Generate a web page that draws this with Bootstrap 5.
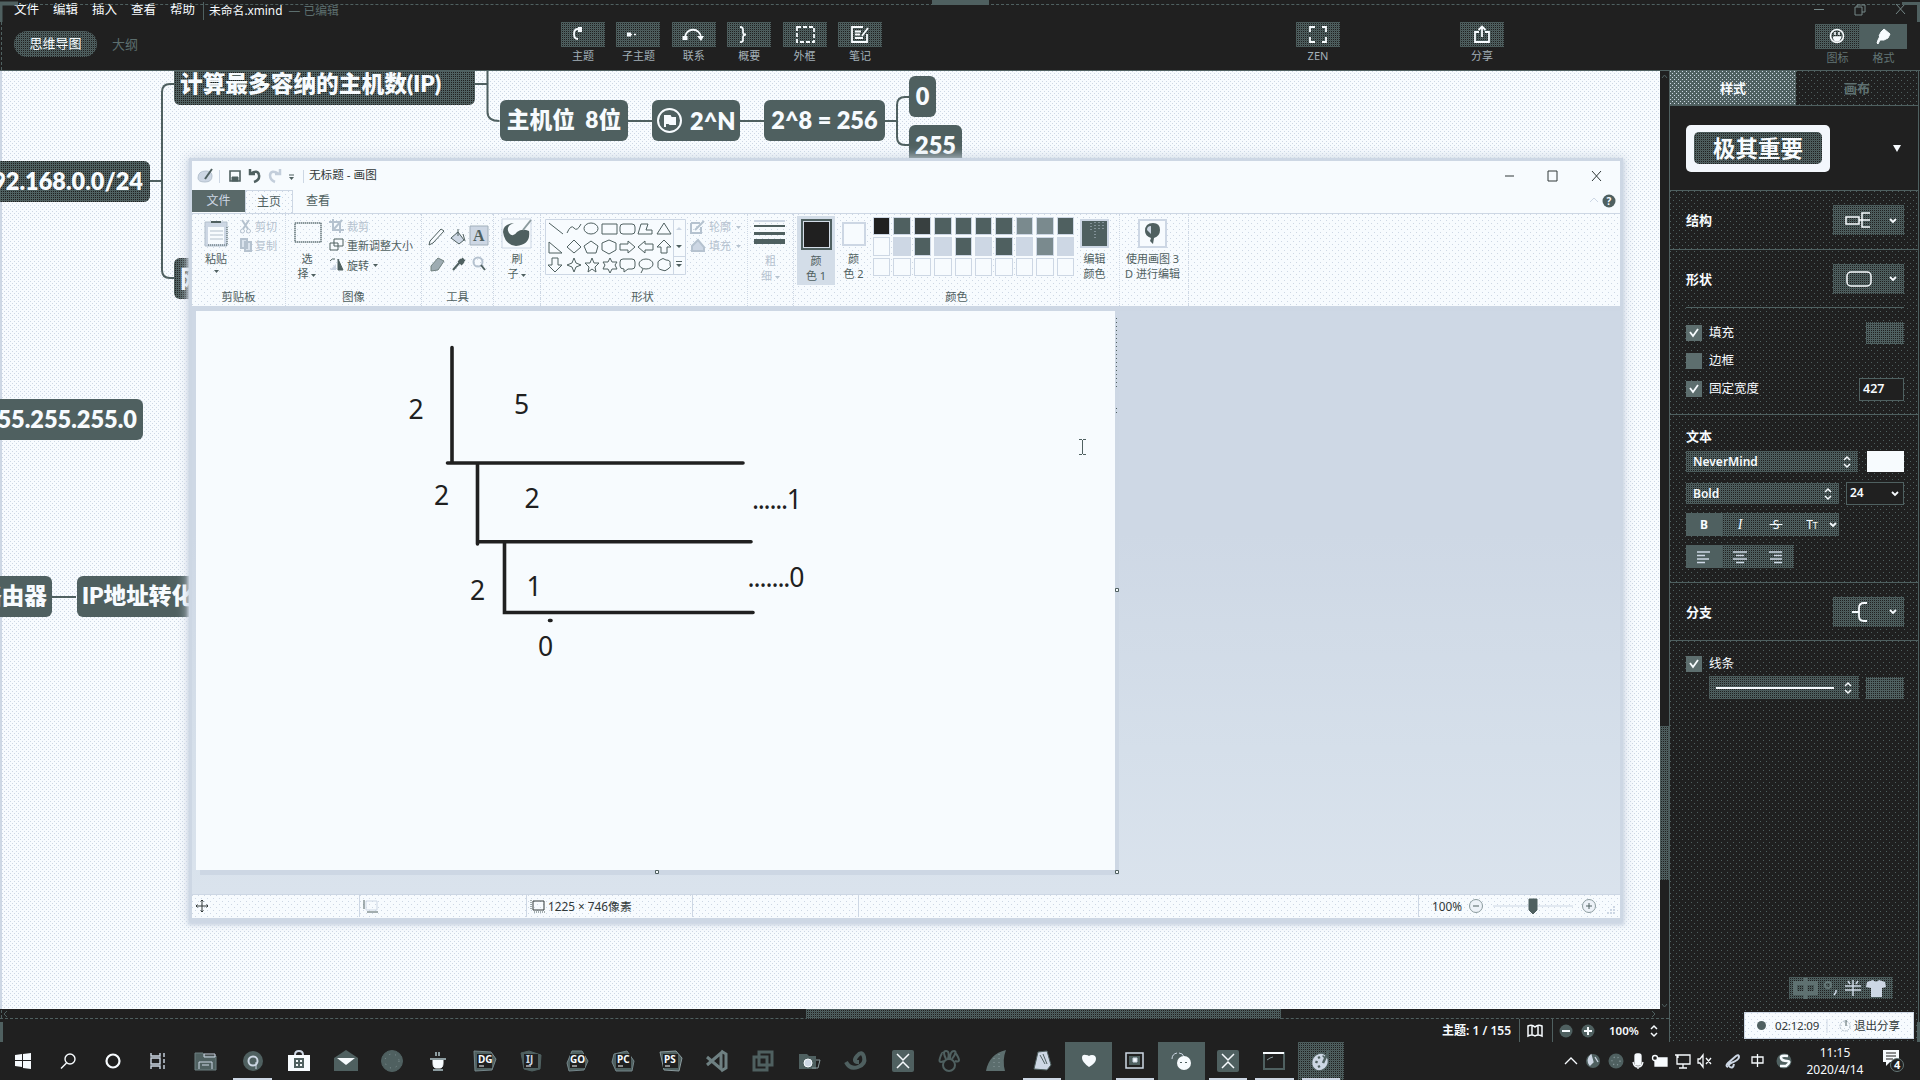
<!DOCTYPE html>
<html lang="zh-CN">
<head>
<meta charset="utf-8">
<title>未命名.xmind</title>
<link rel="stylesheet" href="https://cdn.jsdelivr.net/npm/bootstrap@5.3.0/dist/css/bootstrap.min.css">
<script src="https://cdn.jsdelivr.net/npm/bootstrap@5.3.0/dist/js/bootstrap.bundle.min.js"></script>
<style>
:root{--k:#202020;--t:#4f6060;--l:#cdd7e4;--w:#f7fbfe}
body{width:1920px;height:1080px;overflow:hidden;background:var(--k);color:var(--w);font:12px/16px "Noto Sans","Noto Sans CJK SC",sans-serif;white-space:nowrap}
svg{display:block;flex:none;overflow:visible}
svg:not([fill]){fill:none}
svg:not([stroke]){stroke:currentColor}
svg text{stroke:none}
.dots{background:conic-gradient(from 270deg at 1px 1px,var(--t) 90deg,transparent 0) 0 0/6px 6px,conic-gradient(from 270deg at 1px 1px,var(--t) 90deg,transparent 0) 3px 3px/6px 6px,var(--k)}
.mesh{background:conic-gradient(var(--t) 25%,var(--k) 0 50%,var(--t) 0 75%,#485757 0) 0 0/2px 2px}
.paper{background:conic-gradient(from 270deg at 1px 1px,var(--l) 90deg,transparent 0) 0 0/4px 4px,conic-gradient(from 270deg at 1px 1px,var(--l) 90deg,transparent 0) 2px 2px/4px 4px,var(--w)}
.soft{background:conic-gradient(from 270deg at 1px 1px,var(--l) 90deg,transparent 0) 0 0/6px 6px,conic-gradient(from 270deg at 1px 1px,var(--l) 90deg,transparent 0) 3px 3px/6px 6px,var(--w)}
.pale{background:conic-gradient(from 270deg at 1px 1px,var(--l) 90deg,transparent 0) 0 0/4px 4px,conic-gradient(from 270deg at 1px 1px,var(--l) 90deg,transparent 0) 2px 2px/4px 4px,var(--t)}
/* header */
.top-area{height:70px;border-bottom:1px solid var(--t);padding:0 0 0 14px}
.edge-line{left:0;right:0;top:4px;border-top:1px dashed var(--t)}
.grip{left:932px;top:0;width:57px;height:5px;background:var(--t)}
.menu-row{height:20px;gap:14px;padding-top:2px;font-size:12.5px}
.menu-row>span{width:25px;text-align:center}
.docname{border-left:1px solid var(--t);padding-left:5px;margin-left:-6px}
.pill{width:83px;height:26px;border-radius:13px;line-height:25px;text-align:center;font-size:13px}
.tool{width:44px;font-size:11px;line-height:14px;color:#a3b0b8;text-align:center}
.tool>div{height:25px;color:var(--w);margin-bottom:2px}
.tools{left:561px;top:22px;gap:11.4px}
/* canvas */
.mapwrap{width:1670px;border-right:1px solid var(--t)}
.board{height:938px;box-shadow:inset 2px 0 0 var(--l)}
.node{position:absolute;height:41px;margin-left:2px;border-radius:6px;background:var(--t);font:800 23.5px/40px Lato,"Noto Sans CJK SC",sans-serif;text-align:center;color:var(--w)}
.node.dk{background:conic-gradient(var(--k) 25%,var(--t) 0) 0 0/2px 2px}
.wires{position:absolute;left:0;top:0}
.vbar{width:9px;padding-top:655px}
.vbar>div{height:154px}
.hbar{height:10px;border-bottom:1px dashed var(--t);padding-left:806px}
.hbar>div{width:475px;height:10px}
.status{height:23px;font-weight:600}
.status>.sep{width:1px;background:var(--t);align-self:stretch}
/* paint window */
.paint{position:absolute;left:192px;top:161px;width:1428px;height:757px;background:var(--w);color:var(--t);box-shadow:0 0 0 3px var(--l),0 3px 3px 4px var(--l),0 0 10px 5px #cdd7e4cc}
.ptitle{height:29px;font-size:12px;color:#303838}
.ptabs{height:23px}
.ptabs .filetab{width:53px;height:22px;background:#596969;color:var(--l);text-align:center;line-height:21px}
.ptabs .home{width:48px;height:24px;border:1px solid var(--l);border-bottom:0;text-align:center;line-height:21px}
.ribbon{height:93px;border-top:1px solid var(--l);font-size:11px;line-height:15px}
.rg{border-right:1px dotted var(--l);height:92px;position:relative;display:flex;flex-direction:column}
.rg>footer{text-align:center;height:18px;margin-top:auto;line-height:17px;font-size:11.3px}
.rb{height:70px;padding-top:5px}
.dim{color:#b5c2cf}
.c1{width:38px;height:69px;background:#d3dde8;margin-top:-3px;padding-top:3px}
.sw1{width:31px;height:31px;border:2px solid var(--t);outline:0;padding:1px}
.sw1>div{background:var(--k);height:100%}
.pal{display:grid;grid-template-columns:repeat(10,20.4px);grid-auto-rows:20.3px;width:204px;margin-top:-3px;height:61px}
.pal i{border:2px solid var(--l);outline:1px solid var(--w);outline-offset:-1px;margin:0 1px 0 0;background:var(--t)}
.pal i.z{background:var(--l)} .pal i.e{background:var(--w)} .pal i.b{background:var(--k)} .pal i.p{background:#7a8a8e}
.work{height:588px;border-top:5px solid var(--l);background:linear-gradient(#ced8e5 0 38%,#d5dfea 75%,#dae3ed);position:relative}
.sheet{position:absolute;left:4px;top:0;width:919px;height:559px;background:var(--w);box-shadow:4px 5px 0 #cdd7e4}
.pstat{height:24px;border-top:1px solid var(--l);color:#303838;font-size:12px}
.pstat>div{flex:none;border-right:1px solid var(--l);height:22px;display:flex;align-items:center;padding-left:3px}
/* format panel */
.side{width:249px;border-right:1px solid var(--t)}
.side section{border-bottom:1px solid var(--t);padding:0 14px 0 16px}
.side h6{font-size:13px;font-weight:700;margin:0;line-height:18px}
.ptab{height:34px;line-height:34px;text-align:center;font-size:13px;font-weight:700}
.dd{width:71px;height:30px;padding:0 7px 0 12px}
.chk{width:16px;height:16px;background:#5d6e6e}
.opt{height:16px;font-size:12.5px}
.opt>span{margin-left:7px}
.sel{height:21px;padding:0 7px;font-weight:600}
.swt{width:38px;height:22px;background:conic-gradient(var(--k) 25%,var(--t) 0) 0 0/2px 2px}
.field{border:1px solid var(--t);background:var(--k);font-weight:600;padding-left:3px;line-height:20px}
.cell{width:36px;display:flex;align-items:center;justify-content:center}
.cell.on{background:var(--t)}
/* taskbar */
.task{height:38px}
.ti{width:46.45px;height:38px;display:flex;align-items:center;justify-content:center;position:relative;flex:none}
.ti.n{width:45px}
.ti.run:after{content:"";position:absolute;left:4px;right:4px;bottom:0;height:2px;background:var(--l)}
.ti.act{background:var(--t)}
.rec{position:absolute;left:1744px;top:1012px;width:170px;height:27px;border:1px solid var(--l);color:#303838}
.ime{position:absolute;left:1789px;top:977px;width:104px;height:22px}
</style>
</head>
<body class="d-flex flex-column position-relative">
<header class="top-area position-relative flex-shrink-0" style="height:71px">
  <div class="menu-row d-flex">
    <span>文件</span><span>编辑</span><span>插入</span><span>查看</span><span>帮助</span>
    <div class="docname" style="font-size:11.8px">未命名.xmind <span style="color:#5c6e6e">&nbsp;— 已编辑</span></div>
  </div>
  <div class="d-flex align-items-center" style="margin-top:11px">
    <div class="pill mesh">思维导图</div><div style="margin-left:15px;font-size:13px;color:#5c6e6e">大纲</div>
  </div>
  <div class="edge-line position-absolute"></div><div class="grip position-absolute"></div>
  <div class="tools position-absolute d-flex">
    <div class="tool"><div class="mesh"><svg width="44" height="25" stroke-width="1.8"><path d="M17 7q-4 0-4 5t4 5"/><path d="M17 7.5h4" stroke-width="5"/></svg></div>主题</div>
    <div class="tool"><div class="mesh"><svg width="44" height="25"><path d="M11 12.500h4" stroke-width="4"/><path d="M15 12.500h5" stroke-width="1.500" stroke-dasharray="1 2 3"/></svg></div>子主题</div>
    <div class="tool"><div class="mesh"><svg width="44" height="25" stroke-width="1.8"><path d="M13 16c0-11 16-11 16 0"/><path d="M10.500 14h5v4h-5zM25 14h7l-3 5z" fill="currentColor" stroke="none"/></svg></div>联系</div>
    <div class="tool"><div class="mesh"><svg width="44" height="25" stroke-width="1.8"><path d="M13 5q3.500 0 3 4t3 3.500q-3.500 0-3 4t-3 3.500"/></svg></div>概要</div>
    <div class="tool"><div class="mesh"><svg width="44" height="25" stroke-width="1.8"><rect x="14" y="5" width="17" height="15" stroke-dasharray="4 2"/></svg></div>外框</div>
    <div class="tool"><div class="mesh"><svg width="44" height="25" stroke-width="1.8"><path d="M25 5H14v15h15v-8M17 9.500h6M17 12.500h5M17 16h8M30 6l-6 8"/></svg></div>笔记</div>
  </div>
  <div class="tools position-absolute d-flex" style="left:1296px"><div class="tool"><div class="mesh"><svg width="44" height="25" stroke-width="1.800"><path d="M14 10V5h5M26 5h4v5M14 15v5h5M26 20h4v-5"/></svg></div>ZEN</div></div>
  <div class="tools position-absolute d-flex" style="left:1460px"><div class="tool"><div class="mesh"><svg width="44" height="25" stroke-width="1.800"><path d="M19 10h-4v10h14V10h-4M22 15V5M18.500 8L22 4.500 25.500 8"/></svg></div>分享</div></div>
  <div class="tools position-absolute d-flex" style="left:1815px;top:24px;gap:0">
    <div class="tool" style="width:45px;color:#637575"><div class="mesh"><svg width="44" height="25" stroke-width="1.6"><circle cx="22" cy="12" r="6.500"/><path d="M18.500 13h7q-1 4-3.500 4t-3.500-4" fill="currentColor"/><path d="M20 8v3M24 8v3"/></svg></div>图标</div>
    <div class="tool" style="width:47px;color:#637575"><div style="background:#4f6060"><svg width="47" height="25"><path d="M24 5l6 5-2 4-4 2-5-4 2-4zM20 12l4 4-4 0-2 4-1-1 1-3z" fill="currentColor"/></svg></div>格式</div>
  </div>
  <svg class="position-absolute" style="left:1814px;top:3px;color:#758787" width="95" height="14"><path d="M0 6.500h10M41 4h7v8h-7zM43 4V2h8v7h-3M82 1l9 10M91 1l-9 10"/></svg>
</header>

<main class="d-flex position-relative flex-shrink-0" style="height:971px">
  <div class="mapwrap d-flex flex-column flex-shrink-0">
    <div class="d-flex">
      <div class="board paper position-relative overflow-hidden flex-grow-1">
        <svg class="wires" width="1000" height="560" stroke="#4f6060" stroke-width="2"><g transform="translate(0,-71)"><path d="M150 181h12M176 84h-6q-8 0-8 8v178q0 8 8 8h6M475 84h12M487.500 70v42q0 9 12 9M628 121h24M740 121h24M885 121h12M910 97h-5q-8 0-8 8v32q0 8 8 8h5M52 597h24"/></g></svg>
        <div class="node dk" style="left:172px;top:-7px;width:301px;text-align:left;padding-left:6px;font-size:22.700px">计算最多容纳的主机数(IP)</div>
        <div class="node dk" style="left:-40px;top:90px;width:188px;text-align:right;padding-right:7px">192.168.0.0/24</div>
        <div class="node dk" style="left:172px;top:187px;width:60px;text-align:left;padding-left:6px">网</div>
        <div class="node" style="left:498px;top:29px;width:128px;font-size:22.700px;white-space:pre">主机位  8位</div>
        <div class="node d-flex align-items-center" style="left:650px;top:29px;width:88px;padding-left:5px;gap:8px"><svg width="25" height="25" stroke-width="2"><circle cx="12.500" cy="12.500" r="11.500"/><path d="M8 7v12M8 8h5l1 2h4v6h-5l-1-1H8z" fill="currentColor"/></svg>2^N</div>
        <div class="node pale" style="left:762px;top:29px;width:121px">2^8 = 256</div>
        <div class="node pale" style="left:907px;top:5px;width:27px">0</div>
        <div class="node pale" style="left:907px;top:54px;width:53px">255</div>
        <div class="node" style="left:-60px;top:328px;width:201px;text-align:right;padding-right:6px">255.255.255.0</div>
        <div class="node" style="left:-60px;top:505px;width:110px;text-align:right;padding-right:5px;font-size:22.700px">路由器</div>
        <div class="node" style="left:75px;top:505px;width:180px;text-align:left;padding-left:5px;font-size:22.700px">IP地址转化</div>
      </div>
      <div class="vbar"><div class="mesh"></div></div>
    </div>
    <div class="hbar"><div class="mesh"></div></div>
    <div class="status d-flex align-items-center justify-content-end">
      <span style="margin-right:8px">主题: 1 / 155</span><span class="sep"></span>
      <svg style="margin:0 9px 0 7px" width="16" height="13" stroke-width="1.500"><path d="M1 2q4-2 7 1 3-3 7-1v10q-4-2-7 0-3-2-7 0zM5 1v10M11 1v10"/></svg><span class="sep"></span>
      <svg style="margin:0 14px 0 6px" width="36" height="14"><circle cx="7" cy="7" r="6.500" fill="#4f6060" stroke="none"/><circle cx="29" cy="7" r="6.500" fill="#4f6060" stroke="none"/><path d="M3 7h8M25 7h8M29 3v8" stroke-width="2"/></svg>
      <span style="width:32px;font-size:11.500px">100%</span>
      <svg style="margin:0 11px 0 9px" width="8" height="12" stroke-width="1.500"><path d="M1 4l3-3 3 3M1 8l3 3 3-3"/></svg>
    </div>
  </div>

  <aside class="side dots">
    <div class="d-flex" style="border-bottom:1px solid #4f6060"><div class="ptab pale" style="width:126px">样式</div><div class="ptab flex-grow-1" style="color:#5f7171">画布</div></div>
    <section class="d-flex align-items-center justify-content-between" style="height:85px;background:#202020">
      <div class="d-flex align-items-center justify-content-center" style="width:144px;height:47px;border-radius:5px;background:#f3f7fc"><div class="mesh" style="width:128px;height:32px;border-radius:5px;font:700 22.5px/31px 'Noto Sans CJK SC',sans-serif;text-align:center">极其重要</div></div>
      <svg width="8" height="7" style="margin-right:3px"><path d="M0 0h8l-4 7z" fill="currentColor" stroke="none"/></svg>
    </section>
    <section class="d-flex align-items-center justify-content-between" style="height:59px"><h6>结构</h6><div class="dd mesh d-flex align-items-center justify-content-between"><svg width="26" height="18" stroke-width="1.500"><path d="M1 6h13v7H1zM14 9h11M25 2h-8v14h8"/></svg><svg width="8" height="5" stroke-width="1.800"><path d="M1 1l3 3 3-3"/></svg></div></section>
    <section style="height:165px">
      <div class="d-flex align-items-center justify-content-between" style="height:58px;border-bottom:1px solid #4f6060"><h6>形状</h6><div class="dd mesh d-flex align-items-center justify-content-between"><svg width="26" height="16" stroke-width="1.500"><rect x="2" y="1" width="24" height="14" rx="4"/></svg><svg width="8" height="5" stroke-width="1.800"><path d="M1 1l3 3 3-3"/></svg></div></div>
      <div class="opt d-flex align-items-center" style="margin-top:17px"><div class="chk"><svg width="16" height="16" stroke-width="1.800"><path d="M4 7l3 4 5-7"/></svg></div><span>填充</span><div class="swt ms-auto"></div></div>
      <div class="opt d-flex align-items-center" style="margin-top:12px"><div class="chk mesh"></div><span>边框</span></div>
      <div class="opt d-flex align-items-center" style="margin-top:12px"><div class="chk"><svg width="16" height="16" stroke-width="1.800"><path d="M4 7l3 4 5-7"/></svg></div><span>固定宽度</span><div class="field ms-auto" style="width:45px;height:23px">427</div></div>
    </section>
    <section style="height:168px;padding-top:12px">
      <h6>文本</h6>
      <div class="d-flex justify-content-between" style="margin-top:6px"><div class="sel mesh d-flex align-items-center justify-content-between" style="width:172px">NeverMind<svg width="8" height="12" stroke-width="1.500"><path d="M1 4l3-3 3 3M1 8l3 3 3-3"/></svg></div><div style="width:37px;background:#f7fbfe"></div></div>
      <div class="d-flex justify-content-between align-items-center" style="margin-top:10px;height:23px"><div class="sel mesh d-flex align-items-center justify-content-between" style="width:153px">Bold<svg width="8" height="12" stroke-width="1.500"><path d="M1 4l3-3 3 3M1 8l3 3 3-3"/></svg></div><div class="field d-flex mesh" style="width:58px;height:23px;padding:0"><div style="width:40px;background:#202020;padding-left:3px">24</div><svg width="16" height="21" stroke-width="1.800"><path d="M5 9l3 3 3-3"/></svg></div></div>
      <div class="d-inline-flex mesh" style="margin-top:8px;height:23px;width:153px"><div class="cell on fw-bold">B</div><div class="cell" style="font-family:'Liberation Serif';font-style:italic;font-size:14px">I</div><div class="cell"><s>&nbsp;S&nbsp;</s></div><div class="cell">T<small style="font-size:9px;padding-top:2px">T</small></div><svg width="8" height="23" stroke-width="1.800"><path d="M0 10l3 3 3-3"/></svg></div><br>
      <div class="d-inline-flex mesh" style="margin-top:9px;height:23px;color:#cdd7e4"><div class="cell on"><svg width="14" height="12" stroke-width="1.500"><path d="M0 1h13M0 4.500h8M0 8h12M0 11.500h8"/></svg></div><div class="cell"><svg width="14" height="12" stroke-width="1.500"><path d="M0 1h14M3 4.500h8M0 8h14M3 11.500h8"/></svg></div><div class="cell"><svg width="14" height="12" stroke-width="1.500"><path d="M0 1h13M5 4.500h8M1 8h12M5 11.500h8"/></svg></div></div>
    </section>
    <section class="d-flex align-items-center justify-content-between" style="height:58px"><h6>分支</h6><div class="dd mesh d-flex align-items-center justify-content-between"><svg width="26" height="20" stroke-width="1.800"><path d="M7 10h7M22 1h-3q-5 0-5 5v8q0 5 5 5h3"/></svg><svg width="8" height="5" stroke-width="1.800"><path d="M1 1l3 3 3-3"/></svg></div></section>
    <section class="border-0" style="padding-top:15px">
      <div class="opt d-flex align-items-center"><div class="chk"><svg width="16" height="16" stroke-width="1.800"><path d="M4 7l3 4 5-7"/></svg></div><span>线条</span></div>
      <div class="d-flex justify-content-between align-items-center" style="margin:4px 0 0 23px"><div class="sel mesh d-flex align-items-center justify-content-between" style="width:150px;height:23px"><svg width="118" height="2" stroke-width="2"><path d="M0 1h118"/></svg><svg width="8" height="12" stroke-width="1.500"><path d="M1 4l3-3 3 3M1 8l3 3 3-3"/></svg></div><div class="swt"></div></div>
    </section>
  </aside>
</main>

<footer class="task d-flex flex-shrink-0 align-items-center">
  <div class="ti n"><svg width="16" height="16" fill="#f7fbfe" stroke="none"><path d="M0 2l7-1v6H0zM8 1l8-1v7H8zM0 8h7v6l-7-1zM8 8h8v8l-8-1z"/></svg></div>
  <div class="ti n"><svg width="16" height="16" stroke-width="1.400"><circle cx="10" cy="6" r="5"/><path d="M6.500 10L1 15.500"/></svg></div>
  <div class="ti n"><svg width="16" height="16" stroke-width="2.200"><circle cx="8" cy="8" r="6.500"/></svg></div>
  <div class="ti n"><svg width="16" height="16" stroke="#cdd7e4"><path d="M1 0v3h9V0M1 16v-3h9v3M1 5h9v6H1zM14 0v4M14 6v4M14 12v4" stroke-width="1.400"/></svg></div>
  <div class="ti" style="margin-left:3px"><svg width="22" height="20"><path d="M0 2h8l2 3h11v14H0z" fill="#4f6060" stroke="#6d7f80"/><path d="M9 3h11v3H9zM4 18v-7h13v7M7 14h7" stroke="#cdd7e4"/></svg></div>
  <div class="ti run"><svg width="22" height="22"><circle cx="11" cy="11" r="10" fill="#4f6060" stroke="none"/><circle cx="11" cy="11" r="4.500" stroke="#cdd7e4" stroke-width="2"/><path d="M14 12v7" stroke="#cdd7e4"/></svg></div>
  <div class="ti"><svg width="22" height="22"><path d="M0 5h22v16H0z" fill="#f7fbfe" stroke="none"/><path d="M7 5q0-4 4-4t4 4" stroke="#cdd7e4" stroke-width="2"/><path d="M7 9h8v8H7zM11 9v8M7 13h8" stroke="#4f6060" stroke-width="2"/></svg></div>
  <div class="ti"><svg width="24" height="22"><path d="M0 8l12-8 12 8v13H0z" fill="#4f6060" stroke="none"/><path d="M3 8h18l-9 7z" fill="#f7fbfe" stroke="none"/></svg></div>
  <div class="ti"><svg width="22" height="22"><circle cx="11" cy="11" r="10.500" fill="#4f6060" stroke="#4f6060"/><circle cx="11" cy="11" r="7" stroke="#849597" stroke-dasharray="1 5"/></svg></div>
  <div class="ti"><svg width="16" height="20"><path d="M3 9h10v3q0 5-3 5H6q-3 0-3-5z" fill="#f7fbfe"/><path d="M0 8h16M3 19h10M6 1v4M9 1v4" stroke="#8c9ca0" stroke-width="2"/></svg></div>
  <div class="ti"><svg width="24" height="22"><path d="M1 1l17 1 5 7-4 11-17 1z" fill="#4f6060" stroke="#74868a"/><path d="M4 4h15v14H4z" fill="#202020" stroke="none"/><text x="5" y="13" font-size="10" font-weight="700" fill="#f7fbfe">DG</text><path d="M6 16h5"/></svg></div>
  <div class="ti"><svg width="24" height="22"><path d="M2 3l8-2 12 4-1 14-8 2-8-2z" fill="#4f6060" stroke="#4f6060"/><path d="M5 4h14v14H5z" fill="#202020" stroke="none"/><text x="7" y="13" font-size="10" font-weight="700" fill="#cdd7e4">IJ</text><path d="M7 16h5"/></svg></div>
  <div class="ti"><svg width="24" height="22"><path d="M6 1h10l6 10-4 9-15 1-2-8z" fill="#4f6060" stroke="#74868a"/><path d="M4 4h15v14H4z" fill="#202020" stroke="none"/><text x="4" y="13" font-size="10" font-weight="700" fill="#f7fbfe">GO</text><path d="M6 16h5"/></svg></div>
  <div class="ti"><svg width="24" height="22"><path d="M2 4l13-3 7 10-2 10H4L0 12z" fill="#4f6060" stroke="#74868a"/><path d="M4 4h15v14H4z" fill="#202020" stroke="none"/><text x="5" y="13" font-size="10" font-weight="700" fill="#f7fbfe">PC</text><path d="M6 16h5"/></svg></div>
  <div class="ti"><svg width="24" height="22"><path d="M1 2l16-1 6 7-3 13-15-1z" fill="#4f6060" stroke="#8b9b9e"/><path d="M4 4h15v14H4z" fill="#202020" stroke="none"/><text x="5" y="13" font-size="10" font-weight="700" fill="#f7fbfe">PS</text><path d="M6 16h5"/></svg></div>
  <div class="ti"><svg width="22" height="22" stroke="#6e8082" stroke-width="3"><path d="M1 7l14 12V3L1 15M15 1l5 3v14l-5 3"/></svg></div>
  <div class="ti"><svg width="22" height="22" stroke="#4f6060" stroke-width="3"><path d="M7 2h13v13H7zM2 7h13v13H2z"/></svg></div>
  <div class="ti"><svg width="22" height="20"><path d="M0 3h8l2 2h7v13H0z" fill="#4f6060" stroke="none"/><circle cx="9" cy="12" r="4" fill="#cdd7e4"/><path d="M17 9h4l-2 8h-6" stroke="#8b9b9e"/></svg></div>
  <div class="ti"><svg width="22" height="20" stroke="#4f6060" stroke-width="4"><path d="M1 11q4 8 12 5t6-10-7-1 2 6"/></svg></div>
  <div class="ti"><svg width="22" height="22"><rect width="22" height="22" rx="2" fill="#4f6060" stroke="none"/><path d="M5 4l6 6 6-6M5 18l6-6 6 6" stroke-width="1.500"/></svg></div>
  <div class="ti"><svg width="22" height="22" stroke="#4f6060" stroke-width="2"><circle cx="11" cy="15" r="6"/><path d="M6 11Q0 14 2 8T5 3M8 9Q4 1 8 1t2 8M12 9q0-8 4-8t-2 8M17 11q6 2 3-4t-3-3"/></svg></div>
  <div class="ti"><svg width="22" height="22"><path d="M1 21Q4 4 21 0q-4 10-1 21z" fill="#5c6e6e" stroke="none"/><path d="M9 8v12M14 4v15" stroke="#8b9b9e" stroke-dasharray="1 3"/></svg></div>
  <div class="ti run"><svg width="20" height="20"><path d="M6 1l9-1 4 14-4 5-13-1z" fill="#cdd7e4" stroke="#4f6060"/><path d="M8 4l5 9M11 3l4 10" stroke="#4f6060"/></svg></div>
  <div class="ti act"><svg width="14" height="14"><path d="M7 13Q0 8 0 4t4-3q2 0 3 1 1-1 3-1 4 0 4 4t-7 8z" fill="#f7fbfe" stroke="none"/></svg></div>
  <div class="ti run"><svg width="20" height="18" stroke="#cdd7e4"><path d="M1 1h17v15H1z" stroke-width="1.500"/><path d="M4 4h11v9H4z" fill="#4f6060" stroke="none"/><path d="M8 6h4v4H8z" fill="#f7fbfe"/></svg></div>
  <div class="ti act"><svg width="24" height="22"><path d="M3 9q0-5 5-6M10 3q4 0 5 4" stroke="#cdd7e4"/><circle cx="15" cy="13" r="7" fill="#f7fbfe" stroke="none"/><path d="M12 12v1M17 12v1" stroke="#4f6060" stroke-width="2"/></svg></div>
  <div class="ti run"><svg width="22" height="22"><rect width="22" height="22" rx="2" fill="#4f6060" stroke="none"/><path d="M5 4l6 6 6-6M5 18l6-6 6 6" stroke-width="1.500"/></svg></div>
  <div class="ti run"><svg width="22" height="18"><path d="M1 1h20v16H1z" stroke="#4f6060" stroke-width="2"/><path d="M0 1h21" stroke-width="2"/><path d="M4 8l3-2 3-1" stroke="#8b9b9e"/></svg></div>
  <div class="ti run mesh"><svg width="22" height="22"><ellipse cx="10" cy="12" rx="8" ry="9" transform="rotate(30 10 12)" fill="#cdd7e4" stroke="#4f6060"/><path d="M6 13l1-2M8 8l2-1M13 7l1-1M8 17l2-1M13 13l6-13" stroke="#4f6060" stroke-width="2.500"/></svg></div>
  <div class="ms-auto d-flex align-items-center" style="margin-right:14px">
    <svg width="236" height="22" style="margin-right:5px" stroke-width="1.300"><path d="M1 14l6-6 6 6"/><circle cx="29" cy="11" r="7" fill="#4f6060" stroke="none"/><path d="M27 5q-5 5-1 10l3-3zM31 7l3 5" fill="#cdd7e4" stroke="#cdd7e4"/><circle cx="52" cy="11" r="7.500" fill="#4f6060" stroke="none"/><circle cx="52" cy="11" r="4" stroke="#8b9b9e" stroke-dasharray="1 3"/><rect x="71" y="4" width="6" height="11" rx="2" fill="currentColor"/><path d="M69 12q1 5 5 5t5-5M74 17v2"/><path d="M91 8h12v8H91z" fill="currentColor"/><circle cx="91" cy="8" r="2.500" fill="#202020"/><path d="M113 5h13v9h-13zM119 14v4M115 18h8M111 5h3v3"/><path d="M134 9h2l3-4v12l-3-4h-2zM142 8l5 6M147 8l-5 6"/><path d="M164 17q-3-1 0-4l8-7q3-2 3 1t-8 6q-4 2-1 4t4-3" stroke="#cdd7e4" stroke-width="2"/><path d="M188 7h11v6h-11zM193.500 4v13"/><circle cx="220" cy="11" r="7.500" fill="#4f6060" stroke="none"/><path d="M224 6q-8-1-7 2t6 3-1 5h-6" stroke-width="2.500"/></svg>
    <div class="text-center" style="width:60px;line-height:17px;margin-right:17px">11:15<br>2020/4/14</div>
    <svg width="24" height="26"><path d="M1 2h16v12h-9l-4 4v-4H1z" fill="#f7fbfe" stroke="none"/><path d="M4 5h10M4 8h10M4 11h7" stroke="#202020"/><circle cx="15" cy="17" r="6.500" fill="#202020" stroke="#657777"/><text x="12" y="21" font-size="11" font-weight="700" fill="#f7fbfe">4</text></svg>
  </div>
</footer>

<!-- drawing program floating over the mind map -->
<div class="paint d-flex flex-column">
  <div class="ptitle d-flex align-items-center">
    <svg width="117" height="20" stroke="#4f6060"><path d="M6 12q0-7 8-7 6 0 6 5 0 6-7 6-7 0-7-4z" fill="#cdd7e4" stroke="#b5c2cf"/><path d="M13 13l7-10" stroke-width="2"/><path d="M27.500 4v13M111.500 4v13" stroke="#cdd7e4"/><path d="M38 5h10v10H38z" stroke-width="1.600"/><path d="M40 11h6v4h-6z" fill="#4f6060"/><path d="M58 3v5h5M58 8q8-5 9 1 1 5-5 7" stroke-width="2.500"/><path d="M88 3v5h-5M87 8q-8-5-9 1 0 5 5 7" stroke="#c3cedb" stroke-width="2.500"/><path d="M97 9h5" /><path d="M97 11h5l-2.500 3z" fill="#4f6060" stroke="none"/></svg>
    <span style="font-size:11.600px;margin-bottom:2px">无标题 - 画图</span>
    <svg class="ms-auto" width="98" height="12" style="margin-right:18px"><path d="M1 6h9M44 1h9v10h-9zM88 1l9 10M97 1l-9 10"/></svg>
  </div>
  <div class="ptabs d-flex"><div class="filetab">文件</div><div class="home soft">主页</div><div style="margin:3px 0 0 13px">查看</div><svg class="ms-auto" width="30" height="18" style="margin-right:0"><path d="M0 12l4-4 4 4" stroke="#cdd7e4"/><circle cx="19" cy="11" r="6.500" fill="#4f6060" stroke="none"/><text x="16.500" y="15" font-size="10" font-weight="700" fill="#f7fbfe">?</text></svg></div>
  <div class="ribbon soft d-flex">
    <div class="rg" style="width:94px"><div class="rb d-flex">
      <div class="text-center" style="width:48px;padding-left:0"><svg class="mx-auto" width="24" height="28"><path d="M1 3h22v24H1z" fill="#cdd7e4" stroke="#b3c0cc"/><path d="M4 8h16v17H4z" fill="#f7fbfe" stroke="none"/><path d="M6 12h13M6 16h13M6 20h13" stroke="#b3c0cc"/><path d="M7 3h10" stroke-width="2"/><path d="M23 8v18H4" stroke-dasharray="1 1"/></svg><div style="margin-top:4px">粘贴</div><svg class="mx-auto" width="5" height="3" style="margin-top:4px"><path d="M0 0h5L2.500 3z" fill="currentColor" stroke="none"/></svg></div>
      <div class="dim"><div class="d-flex"><svg width="15" height="15"><path d="M2 1l6 9M9 1l-6 9" stroke-width="2"/><circle cx="2.500" cy="12" r="2"/><circle cx="8.500" cy="12" r="2"/></svg>剪切</div><div class="d-flex" style="margin-top:4px"><svg width="15" height="15"><path d="M1 1h6v9H1zM5 4h6v9H5z" fill="#dae3ed" stroke-width="2"/></svg>复制</div></div>
    </div><footer>剪贴板</footer></div>
    <div class="rg" style="width:136px"><div class="rb d-flex">
      <div class="text-center" style="width:42px"><svg width="28" height="36" style="margin-left:8px"><rect x="1" y="4" width="26" height="19" stroke="#93a1a8"/><rect x="1" y="4" width="26" height="19" stroke-dasharray="1 1"/></svg><div style="margin-top:-4px">选<br>择 <svg class="d-inline" width="5" height="3" style="vertical-align:middle"><path d="M0 0h5L2.500 3z" fill="currentColor" stroke="none"/></svg></div></div>
      <div><div class="d-flex dim"><svg width="19" height="14"><path d="M5 0v11h11M1 3h11v11M6 10l8-9" stroke-width="2"/></svg>裁剪</div><div class="d-flex" style="margin-top:4px"><svg width="19" height="14"><path d="M6 1h9v7H6zM2 5h8v7H2z" fill="#f7fbfe"/></svg>重新调整大小</div><div class="d-flex" style="margin-top:5px"><svg width="19" height="14"><path d="M10 1l5 11h-5z" fill="#4f6060"/><path d="M8 6v6H2z" fill="#cdd7e4" stroke="none"/><path d="M2 3q2-3 5-2"/></svg>旋转<svg width="5" height="3" style="margin:6px 0 0 4px"><path d="M0 0h5L2.500 3z" fill="currentColor" stroke="none"/></svg></div></div>
    </div><footer>图像</footer></div>
    <div class="rg" style="width:72px"><div class="rb"><svg width="71" height="60"><path d="M8 22l11-12 3 2-11 12-4 2z" fill="#f7fbfe"/><path d="M36 13l6 8-5 4-8-6z" fill="#cdd7e4"/><path d="M36 10v7M41 15l2 7"/><path d="M48 7h18v19H48z" fill="#cdd7e4" stroke="#a2b0bb"/><text x="51" y="22" font-family="Liberation Serif" font-weight="700" font-size="16" fill="#4f6060">A</text><path d="M9 47l7-8 6 3-6 9-7 1z" fill="#9eacb2" stroke="#71817f"/><path d="M31 51l7-8" stroke-width="2"/><path d="M37 41l4 4M39 43l3-3" stroke-width="4"/><circle cx="56" cy="43" r="4.500" stroke="#b5c2cf" stroke-width="2"/><path d="M59 46l4 5" stroke-width="2"/></svg></div><footer>工具</footer></div>
    <div class="rg" style="width:47px"><div class="rb text-center"><svg width="31" height="31" style="margin-left:7px;margin-top:-1px"><path d="M1 1h29v29H1z" stroke="#cdd7e4" fill="#f7fbfe"/><path d="M2 14q0-8 11-9-9 3-5 10 4 5 8-1 5-4 12-1 2 14-13 15Q4 27 2 14z" fill="#4f6060" stroke="none"/><path d="M22 12l8-10" stroke="#8b9b9e" stroke-width="2"/></svg><div style="margin-top:2px">刷<br>子 <svg class="d-inline" width="5" height="3"><path d="M0 0h5L2.500 3z" fill="currentColor" stroke="none"/></svg></div></div></div>
    <div class="rg" style="width:207px"><div class="rb d-flex">
      <svg width="141" height="56" style="margin-left:4px"><path d="M.5.500h140v55H.500z" stroke="#cdd7e4" fill="#f7fbfe"/><path d="M128.500 0v56M128 37.500h12" stroke="#cdd7e4"/>
      <g><path d="M4 4l14 11M22 14q4-9 7-5t7-4"/><ellipse cx="46" cy="9.500" rx="7" ry="5.500"/><path d="M57 5h15v10H57z"/><rect x="75" y="5" width="15" height="10" rx="3"/><path d="M93 15l3-10h7l-2 6h6v4zM112 15h14l-7-11zM4 23v11h13zM29 21l7 7-7 6-7-6zM46 22l7 5-2 7h-9l-3-7zM64 21l7 3v7l-7 4-7-4v-7zM75 25h8v-3l7 6-7 6v-3h-8zM108 25h-8v-3l-7 6 7 6v-3h8zM119 21l7 7h-4v6h-6v-6h-4zM10 53l-7-7h4v-7h6v7h4zM29 39l2 5 5 2-5 2-2 5-2-5-5-2 5-2zM47 39l2 5h5l-4 4 1 5-4-3-4 3 1-5-4-4h5zM65 39l2 4h5l-2 3 2 4h-5l-2 4-2-4h-5l2-4-2-3h5z"/><path d="M78 40h9q3 0 3 3v4q0 3-3 3h-4l-4 3v-3q-4 0-4-3v-4q0-3 3-3z"/><ellipse cx="101" cy="45" rx="7" ry="5"/><path d="M98 50l-2 4M115 41q3-3 6 0 5 0 4 4 2 3-2 5-3 3-6 1-5-1-4-5-1-4 2-5z"/></g>
      <path d="M131 11l3-3 3 3z" fill="#cdd7e4" stroke="none"/><path d="M131 26h6l-3 3zM131 45h6l-3 3zM131 43h6" fill="#4f6060" stroke="none"/><path d="M131 42.500h6"/></svg>
      <div class="dim" style="margin-left:4px"><div class="d-flex"><svg width="19" height="15"><path d="M1 4h9M1 4v10h10V8M5 11l9-9" stroke-width="2"/></svg>轮廓<svg width="5" height="3" style="margin:7px 0 0 5px"><path d="M0 0h5L2.500 3z" fill="currentColor" stroke="none"/></svg></div><div class="d-flex" style="margin-top:4px"><svg width="19" height="15"><path d="M2 8l6-6 6 7v4H2z" fill="#cdd7e4" stroke-width="2"/></svg>填充<svg width="5" height="3" style="margin:7px 0 0 5px"><path d="M0 0h5L2.500 3z" fill="currentColor" stroke="none"/></svg></div></div>
    </div><footer style="padding-right:3px">形状</footer></div>
    <div class="rg" style="width:46px"><div class="rb text-center dim"><svg width="31" height="34" style="margin-left:6px" stroke="#4f6060"><path d="M0 2h31" stroke="#cdd7e4" stroke-width="2"/><path d="M0 7h31" stroke-width="2"/><path d="M0 14.500h31" stroke-width="3"/><path d="M0 22.500h31" stroke-width="5"/></svg>粗<br>细 <svg class="d-inline" width="5" height="3"><path d="M0 0h5L2.500 3z" fill="currentColor" stroke="none"/></svg></div></div>
    <div class="rg" style="width:326px"><div class="rb d-flex text-center">
      <div class="c1" style="margin-left:3px"><div class="sw1 mx-auto"><div></div></div><div style="margin-top:3px">颜<br>色 1</div></div>
      <div style="width:37px"><div class="mx-auto" style="width:24px;height:24px;background:#f7fbfe;border:2px solid #cdd7e4;margin-top:3px;margin-bottom:5px"></div>颜<br>色 2</div>
      <div class="pal"><i class="b"></i><i></i><i class="b" style="background:#384040"></i><i></i><i></i><i></i><i></i><i class="p"></i><i class="p"></i><i></i><i class="e"></i><i class="z"></i><i></i><i class="z"></i><i></i><i class="z"></i><i></i><i class="z"></i><i class="p"></i><i class="z"></i><i class="e"></i><i class="e"></i><i class="e"></i><i class="e"></i><i class="e"></i><i class="e"></i><i class="e"></i><i class="e"></i><i class="e"></i><i class="e"></i></div>
      <div style="width:37px"><svg width="29" height="29" style="margin:0 0 3px 4px"><path d="M1 1h27v27H1z" fill="#4f6060" stroke="#cdd7e4" stroke-width="2"/><path d="M11 4v8M15 3v17M19 3v9M23 3v8" stroke="#b5c2cf" stroke-dasharray="1 2"/></svg>编辑<br>颜色</div>
    </div><footer>颜色</footer></div>
    <div class="rg" style="width:69px"><div class="rb text-center" style="padding-right:8px;padding-left:5px"><svg class="mx-auto" width="29" height="29" style="margin-bottom:3px"><path d="M1 1h27v27H1z" fill="#f7fbfe" stroke="#cdd7e4" stroke-width="2"/><path d="M15 4q7 0 7 7 0 6-6 8l-1 6-3-3 1-3q-6-2-6-7 0-8 8-8z" fill="#4f6060" stroke="none"/><path d="M9 11q0-4 4-4v8z" fill="#cdd7e4" stroke="none"/></svg>使用画图 3<br>D 进行编辑</div></div>
  </div>
  <div class="work">
    <div class="sheet"></div>
    <!-- hand-drawn short division, drawn in screen coordinates -->
    <svg class="position-absolute" style="left:0;top:0" width="1428" height="580" stroke="#202020"><g transform="translate(-192,-311)">
      <g stroke-width="3.600" stroke-linecap="round"><path d="M452 347.500v115M447.500 463H743M477.500 463v81M477.500 541.800H751M504.500 542v70.500H753M549.500 620.500h1.500"/></g>
      <g font-family="Noto Sans" font-size="26.500" fill="#202020"><text x="408.500" y="418.500">2</text><text x="514" y="413.500">5</text><text x="434" y="504.500">2</text><text x="524.500" y="507.500">2</text><text x="752" y="509" textLength="50">......1</text><text x="470" y="599.500">2</text><text x="526.500" y="596">1</text><text x="747.500" y="587" textLength="57">.......0</text><text x="538" y="655.500">0</text></g>
      <path d="M1079 439.500h3M1083 439.500h3M1082.500 440v14M1079 454.500h3M1083 454.500h3" stroke="#4f6060"/>
      <path d="M1116.500 318v70M1116.500 408v8" stroke="#4f6060" stroke-dasharray="1 3"/>
      <path d="M655.500 870.500h3v3h-3zM1115.500 870.500h3v3h-3zM1115.500 588.500h3v3h-3z" fill="#f7fbfe" stroke="#4f6060"/>
    </g></svg>
  </div>
  <div class="pstat soft d-flex">
    <div style="width:168px"><svg width="14" height="14"><path d="M7 1v12M1 7h12M5.500 2.500L7 1l1.500 1.500M5.500 11.500L7 13l1.500-1.500M2.500 5.500L1 7l1.500 1.500M11.500 5.500L13 7l-1.500 1.500"/></svg></div>
    <div style="width:167px"><svg width="15" height="13"><path d="M3 1h11v9H3z" stroke="#cdd7e4"/><path d="M1 0v9M4 12h11" stroke="#4f6060"/></svg></div>
    <div style="width:166px"><svg width="15" height="13" style="margin-right:3px"><path d="M3 1h11v9H3z"/><path d="M1 0v9M4 12h11" stroke="#4f6060" stroke-dasharray="1 1"/></svg><span style="font-size:11.800px">1225 × 746像素</span></div>
    <div style="width:166px"></div><div style="width:560px"></div>
    <div class="border-0" style="padding-left:13px"><span style="width:37px;font-size:11.800px">100%</span><svg width="150" height="16" stroke="#4f6060"><circle cx="7" cy="8" r="6.500" fill="#edf2f8" stroke="#8b9b9e"/><path d="M4 8h6"/><path d="M24 8h80" stroke="#cdd7e4"/><path d="M60 1h8v11l-4 4-4-4z" fill="#4f6060"/><circle cx="120" cy="8" r="6.500" fill="#edf2f8" stroke="#8b9b9e"/><path d="M117 8h6M120 5v6"/><path d="M138 15h8M141 12h5M144 9h2" stroke="#cdd7e4" stroke-width="2" stroke-dasharray="2 1"/></svg></div>
  </div>
</div>

<div class="ime mesh"><svg width="104" height="22"><path d="M6 6h21v10H6zM16.500 1v21" stroke="#5f7171" stroke-width="4"/><circle cx="39" cy="8" r="3" stroke="#657777" stroke-width="2"/><path d="M47 13v2l-2 3M64 3v16M56 9h16M56 13h16M59 4l2 3M69 4l-2 3" stroke="#cdd7e4" stroke-width="1.500"/><path d="M78 5l6-2q3 3 6 0l6 2 1 5-4 1v9H82v-9l-5-1z" fill="#cdd7e4" stroke="none"/></svg></div>
<div class="rec soft d-flex align-items-center"><svg width="9" height="9" style="margin:0 9px 0 12px"><circle cx="4.500" cy="4.500" r="4.500" fill="#4f6060" stroke="none"/></svg><span style="width:45px;font-size:11.5px;letter-spacing:-.2px">02:12:09</span><svg width="34" height="16"><path d="M7 1v14" stroke="#cdd7e4"/><circle cx="25" cy="8" r="5" stroke="#aab8c4" stroke-dasharray="2 1"/><path d="M26 2v6" stroke="#4f6060"/></svg><span style="font-size:11.500px">退出分享</span></div>
<svg class="position-absolute pe-none" style="left:0;top:0" width="1920" height="1080" stroke="#4f6060"><path d="M0 3.500h18" stroke-width="4"/><path d="M1 2v20M1.500 1022v20M1902 3.500h17M1918.500 2v20M1918.500 1022v20" stroke-width="3"/><path d="M1.500 22v48M1.500 1010v10" stroke-dasharray="3 2"/><path d="M1662 78l2.500-3 2.500 3M1662 1004l2.500 3 2.500-3M7 1011l-3 3 3 3M1652 1011l3 3-3 3"/></svg>
</body>
</html>
